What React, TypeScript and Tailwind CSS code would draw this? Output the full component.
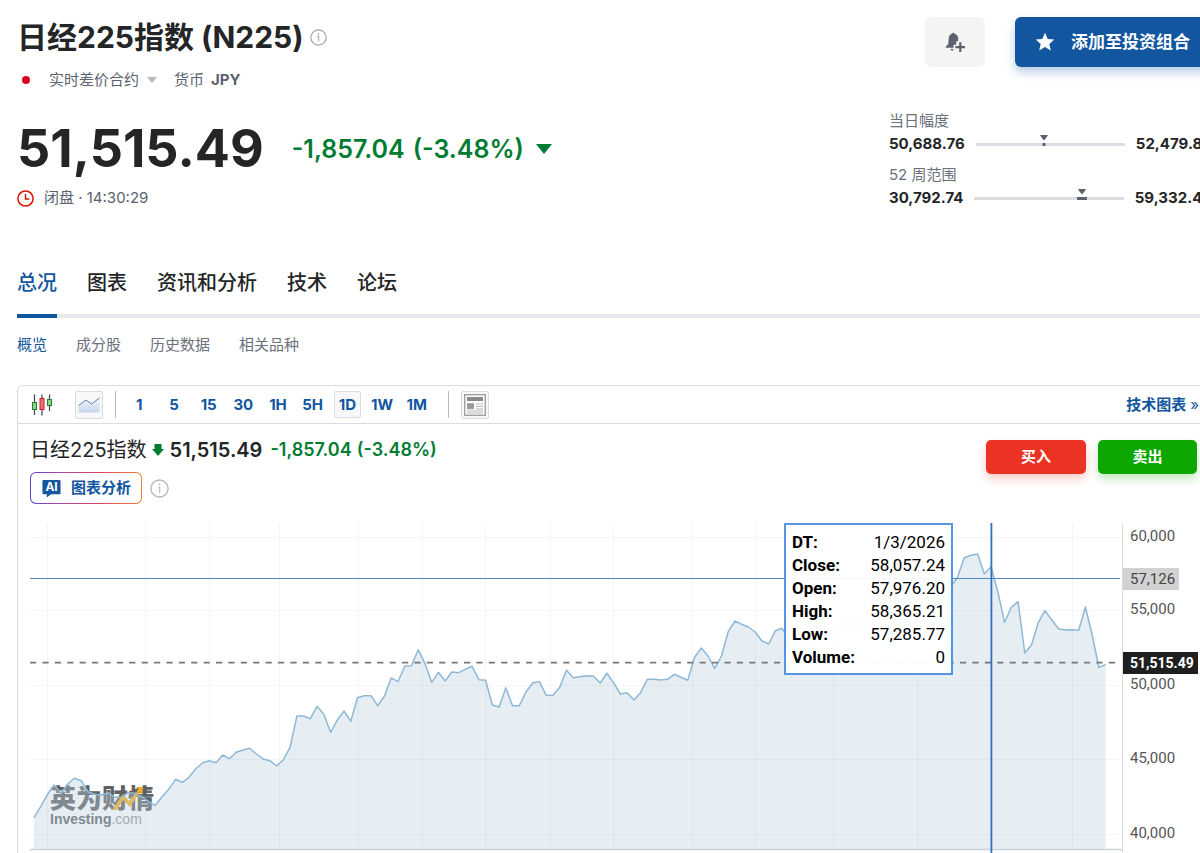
import React from "react";

const FONT = "font-[Inter,'Noto_Sans_CJK_SC',sans-serif]";
const CHART_FONT = "font-[Roboto,'Noto_Sans_CJK_SC',sans-serif]";

const PLOT_W = 1092;
const PLOT_H = 330;
const BASE_Y = 326;
const START_X = 4;
const STEP = 6.74;

const SERIES = [
  294.7, 283.7, 271.3, 262, 270.3, 261, 255.3, 257.7, 268.7, 271.3, 272, 269.7, 274.3, 273.7, 269.7, 270.3,
  273.7, 278.7, 282.3, 273.7, 266.3, 256.3, 259.3, 254.3, 245.7, 240, 237.7, 239.7, 232, 235.7, 229.3, 227,
  225.3, 231, 236, 237.7, 243, 236.7, 224.3, 193, 193, 195.7, 183.3, 191.3, 209.3, 197, 188, 198.3, 174.7,
  172.7, 172.7, 182.7, 173, 155, 158.7, 143.3, 142.7, 126.7, 140.3, 159.3, 149.3, 158, 149, 149.7, 146.3,
  143.3, 156.7, 157.3, 182, 184, 164.7, 182.7, 182.7, 169, 159.7, 158.7, 172.3, 172.3, 164.3, 147.3, 154.7,
  153.7, 152.7, 153.3, 160, 150.3, 159.7, 171, 169.7, 177, 169.7, 156.3, 156.3, 157, 156.3, 151.3, 154.3,
  157.3, 134.3, 125, 133, 145.7, 133, 108.7, 98, 101.3, 104, 109, 118, 121, 107.7, 105.3, 117, 122, 116,
  119, 112, 108, 114, 120, 92, 97, 105, 100, 90, 66, 40, 44, 52, 58, 50, 48, 56, 62, 55, 60, 64, 54.7, 35,
  32.3, 31, 50.7, 43.7, 68.7, 99.3, 84.3, 78.7, 130, 122, 99.3, 87.7, 96.7, 105.7, 107, 106.7, 107.3, 84,
  112, 144.7, 141.3,
];

const GRID_X = [17, 115, 179, 249, 328, 392, 455, 520, 583, 662, 725, 803, 887, 1042];
const TICKS = [
  { label: "60,000", y: 14 },
  { label: "55,000", y: 87 },
  { label: "50,000", y: 162 },
  { label: "45,000", y: 236 },
  { label: "40,000", y: 311 },
];

const linePath = SERIES.map((y, i) => `${i ? "L" : "M"}${(START_X + i * STEP).toFixed(1)} ${y}`).join("");
const lastX = (START_X + (SERIES.length - 1) * STEP).toFixed(1);
const areaPath = `${linePath}L${lastX} ${BASE_Y}L${START_X} ${BASE_Y}Z`;

const TABS = ["总况", "图表", "资讯和分析", "技术", "论坛"];
const SUB_TABS = ["概览", "成分股", "历史数据", "相关品种"];
const PERIODS = ["1", "5", "15", "30", "1H", "5H", "1D", "1W", "1M"];
const QUOTE = [
  ["DT:", "1/3/2026"],
  ["Close:", "58,057.24"],
  ["Open:", "57,976.20"],
  ["High:", "58,365.21"],
  ["Low:", "57,285.77"],
  ["Volume:", "0"],
];

function InfoIcon({ className }: { className: string }) {
  return (
    <svg viewBox="0 0 18 18" className={className} fill="none" aria-hidden="true">
      <circle cx="9" cy="9" r="8.1" stroke="currentColor" strokeWidth="1.3" />
      <circle cx="9" cy="5.2" r="0.9" fill="currentColor" />
      <path d="M7.8 7.800H9.200V13" stroke="currentColor" strokeWidth="1.1" />
    </svg>
  );
}

function BellPlusIcon() {
  return (
    <svg viewBox="0 0 20 20" className="size-5" fill="#5b616e" aria-hidden="true">
      <path d="M7.2 1.600C7.700 .4 9.500 .5 9.700 1.900C11.800 2.500 13 4 13.100 6L13.300 9.200H11.200V12.800H8.600V15.800H.6L1 14.500L3.200 12.300L3.700 6.300C3.900 4 5.200 2.200 7.200 1.600Z" />
      <path d="M5.400 16.900H8.600C8.400 18 7.900 18.400 7.200 18.400S5.700 18 5.400 16.900Z" />
      <path d="M14.200 10.200H16.400V14H20V16.200H16.400V20H14.200V16.200H10.400V14H14.200Z" />
    </svg>
  );
}

type RangeProps = { label: string; low: string; high: string; start: number; width: string };

function RangeRow({ label, low, high, start, width }: RangeProps) {
  return (
    <div>
      <div className="text-[15px] leading-[22px] text-[#6a707c]">{label}</div>
      <div className="flex h-6 items-center gap-[11px] text-[15px] font-bold text-[#232526]">
        <span>{low}</span>
        <div className="relative h-[3px] flex-1 bg-[#d9dce1]">
          <div className={`absolute top-0 h-[3px] -translate-x-1/2 bg-[#5b616e] ${width}`} style={{ left: `${start}%` }} />
          <svg
            viewBox="0 0 8 6"
            className="absolute -top-2 h-[6px] w-2 -translate-x-1/2"
            style={{ left: `${start}%` }}
            aria-hidden="true"
          >
            <path d="M0 0H8L6.500 2.500L4 5.500L1.500 2.500Z" fill="#5b616e" />
          </svg>
        </div>
        <span>{high}</span>
      </div>
    </div>
  );
}

function Header() {
  return (
    <header className="flex justify-between pt-[17px]">
      <div>
        <div className="flex items-center gap-[6px]">
          <h1 className="text-[30px] leading-10 font-bold text-[#232526]">日经225指数 (N225)</h1>
          <InfoIcon className="size-[17px] text-[#a3a6ab]" />
        </div>
        <div className="mt-[11px] flex h-6 items-center text-[15px] text-[#5b616e]">
          <span className="ml-[5px] size-2 rounded-full bg-[#d80027]" />
          <button type="button" className="ml-[19px] flex items-center gap-2">
            实时差价合约
            <svg viewBox="0 0 10 6" className="h-[6px] w-[10px]" aria-hidden="true">
              <path d="M0 0H10L5 6Z" fill="#b5b8bd" />
            </svg>
          </button>
          <span className="ml-[17px]">货币</span>
          <span className="ml-[7px] font-bold">JPY</span>
        </div>
        <div className="mt-[25px] flex items-center">
          <div className="text-[52px] leading-[64px] font-bold text-[#232526]">51,515.49</div>
          <div className="ml-7 flex items-center text-[25px] font-semibold text-[#007c32]">
            <span>-1,857.04</span>
            <span className="ml-2">(-3.48%)</span>
            <svg viewBox="0 0 16 10" className="ml-3 h-[10px] w-4" aria-hidden="true">
              <path d="M0 0H16L8 10Z" fill="#007c32" />
            </svg>
          </div>
        </div>
        <div className="mt-[5px] flex h-6 items-center gap-[10px] text-[15px] text-[#5b616e]">
          <svg viewBox="0 0 17 17" className="size-[17px]" fill="none" stroke="#d91400" strokeWidth="1.500" aria-hidden="true">
            <circle cx="8.500" cy="8.500" r="7.600" />
            <path d="M8.500 4V9H12.300" />
          </svg>
          <span>闭盘 · 14:30:29</span>
        </div>
      </div>

      <div className="shrink-0">
        <div className="-mr-4 flex justify-end gap-[30px]">
          <button type="button" aria-label="添加提醒" className="flex h-[50px] w-[60px] items-center justify-center rounded-md bg-[#f4f4f5]">
            <BellPlusIcon />
          </button>
          <button
            type="button"
            className="flex h-[50px] w-[217px] items-center gap-4 rounded-md bg-[#1256a0] pl-5 text-[17px] font-bold whitespace-nowrap text-white shadow-[0_5px_10px_rgba(18,86,160,0.3)]"
          >
            <svg viewBox="0 0 20 20" className="size-5" fill="white" aria-hidden="true">
              <path d="M10 .8l2.700 6.100 6.600.6-5 4.400 1.500 6.500L10 15l-5.800 3.400 1.500-6.500-5-4.400 6.600-.6z" />
            </svg>
            添加至投资组合
          </button>
        </div>
        <div className="mt-[43px] mr-1 ml-auto flex w-[323px] flex-col gap-2">
          <RangeRow label="当日幅度" low="50,688.76" high="52,479.88" start={46} width="w-[3px]" />
          <RangeRow label="52 周范围" low="30,792.74" high="59,332.43" start={72} width="w-[10px]" />
        </div>
      </div>
    </header>
  );
}

function Toolbar() {
  return (
    <div className="flex h-[37px] items-center pr-4 pl-[13px] text-[15px] text-[#1256a0]">
      <button type="button" aria-label="K线图" className="flex h-7 w-[22px] items-center">
        <svg viewBox="0 0 22 22" className="size-[22px]" aria-hidden="true">
          <path d="M3.500 0.500V21M11 0.500V21.500M18.500 0.500V17" stroke="#444" strokeWidth="1.200" />
          <rect x="1.500" y="8.500" width="4" height="7" fill="#82d77f" stroke="#2f7a3a" />
          <rect x="9" y="4.500" width="4" height="11" fill="#ff6b70" stroke="#b3262c" />
          <rect x="16.500" y="5.500" width="4" height="6" fill="#82d77f" stroke="#2f7a3a" />
        </svg>
      </button>
      <button type="button" aria-label="面积图" className="ml-[22px] flex size-7 items-center justify-center rounded-xs border border-[#d9dce1] bg-[#f7f8fa]">
        <svg viewBox="0 0 22 16" className="h-4 w-[22px]" aria-hidden="true">
          <defs>
            <linearGradient id="area-icon" x1="0" y1="0" x2="0" y2="1">
              <stop offset="0" stopColor="#f1f5fb" />
              <stop offset="1" stopColor="#c6d6ee" />
            </linearGradient>
          </defs>
          <path d="M0.500 9L8 3.500L13.500 7.500L21.500 1.500V15.500H0.500Z" fill="url(#area-icon)" />
          <path d="M0.500 8.500L8 3L13.500 7L21.500 1" fill="none" stroke="#5c7fae" />
        </svg>
      </button>
      <span className="ml-3 h-[27px] w-px bg-[#b5b8bd]" />
      <div className="ml-[6px] grid w-[312px] grid-cols-9 place-items-center font-bold">
        {PERIODS.map((p) => (
          <button
            key={p}
            type="button"
            className={
              p === "1D"
                ? "h-[27px] min-w-[27px] rounded-xs border border-[#d9dce1] bg-[#f7f8fa]"
                : "h-[27px] min-w-[27px]"
            }
          >
            {p}
          </button>
        ))}
      </div>
      <span className="ml-[14px] h-[27px] w-px bg-[#b5b8bd]" />
      <button type="button" aria-label="新闻" className="ml-3 flex size-7 items-center justify-center rounded-xs border border-[#d9dce1] bg-[#f7f8fa]">
        <svg viewBox="0 0 22 22" className="size-[22px]" fill="none" aria-hidden="true">
          <rect x="0.700" y="0.700" width="20.600" height="20.600" fill="white" stroke="#a0a0a0" strokeWidth="1.400" />
          <path d="M3 5H19" stroke="#8a8a8a" strokeWidth="4" />
          <path d="M3 12.200H10" stroke="#9a9a9a" strokeWidth="6" />
          <path d="M12 10H19M12 12.500H19M12 15H19M3 17H19M3 19H19" stroke="#b5b5b5" />
        </svg>
      </button>
      <a href="#technical" className="ml-auto flex shrink-0 gap-1 font-bold">
        技术图表 <span className="font-normal">»</span>
      </a>
    </div>
  );
}

function ChartHeader() {
  return (
    <div className="flex justify-between pt-[13px] pr-[18px] pl-3">
      <div>
        <div className="flex h-[26px] items-center text-[#232526]">
          <span className="text-[20px]">日经225指数</span>
          <svg viewBox="0 0 12 12" className="ml-[5px] h-3 w-3" aria-hidden="true">
            <path d="M2.500 0H9.500V5H12L6 12L0 5H2.500Z" fill="#007c32" />
          </svg>
          <span className="ml-[6px] text-[20px] font-semibold">51,515.49</span>
          <span className="ml-2 text-[18px] font-semibold text-[#007c32]">-1,857.04</span>
          <span className="ml-[5px] text-[18px] font-semibold text-[#007c32]">(-3.48%)</span>
        </div>
        <div className="mt-[9px] flex items-center gap-2">
          <button
            type="button"
            className="h-8 w-28 rounded-md bg-[linear-gradient(90deg,#5b3fd6_0%,#c04a9a_35%,#e0406a_60%,#f08030_100%)] p-px"
          >
            <span className="flex h-full items-center gap-[10px] rounded-[5px] bg-white pl-[11px] text-[15px] font-bold text-[#1256a0]">
              <svg viewBox="0 0 20 20" className="h-[19px] w-[19px]" aria-hidden="true">
                <path d="M1.500 1H18.500Q19.500 1 19.500 2V15Q19.500 16 18.500 16H9.500L5 19.500V16H1.500Q.500 16 .500 15V2Q.500 1 1.500 1Z" fill="#1256a0" />
                <text x="10" y="13" textAnchor="middle" fontSize="12.500" fontWeight="700" fill="white">
                  AI
                </text>
              </svg>
              图表分析
            </span>
          </button>
          <InfoIcon className="size-[19px] text-[#b5b8bd]" />
        </div>
      </div>
      <div className="mt-[3px] flex gap-3 text-[15px] font-bold text-white">
        <button type="button" className="h-[34px] w-[100px] rounded-[5px] bg-[#ea3323] shadow-[0_5px_10px_rgba(234,51,35,0.25)]">
          买入
        </button>
        <button type="button" className="h-[34px] w-[99px] rounded-[5px] bg-[#0ea600] shadow-[0_5px_10px_rgba(14,166,0,0.25)]">
          卖出
        </button>
      </div>
    </div>
  );
}

function Watermark() {
  return (
    <div className="absolute top-[263px] left-5 font-[Inter,'Noto_Sans_CJK_SC',sans-serif] text-[#606163]">
      <div className="text-[26px] leading-[26px] font-black">英为财情</div>
      <div className="font-['Liberation_Sans',sans-serif] text-[14px] leading-[14px]">
        <b>Investing</b>
        <span className="text-[#94979b]">.com</span>
      </div>
      <svg viewBox="0 0 32 26" className="absolute top-0 left-[62px] h-[26px] w-8" aria-hidden="true">
        <path d="M0 24L11 8L17 15L27 3L24 1H31L30 9L28 6L18 21L11 14L5 24Z" fill="#f2ae1c" />
      </svg>
    </div>
  );
}

function Chart() {
  return (
    <div className={`mt-[19px] flex h-[330px] pl-3 ${CHART_FONT}`}>
      <div className="relative min-w-0 flex-1">
        <Watermark />
        <svg
          viewBox={`0 0 ${PLOT_W} ${PLOT_H}`}
          preserveAspectRatio="none"
          className="relative block h-full w-full"
          fill="none"
          role="img"
          aria-label="日经225指数走势"
        >
          <path d={areaPath} fill="#b9cfe0" fillOpacity="0.36" />
          {GRID_X.map((x) => (
            <path key={x} d={`M${x}.500 0V${BASE_Y}`} stroke="#000" strokeOpacity="0.035" />
          ))}
          {TICKS.map((t) => (
            <path key={t.label} d={`M0 ${t.y}.500H${PLOT_W}`} stroke="#000" strokeOpacity="0.035" />
          ))}
          <path d={linePath} stroke="#8fb8d6" strokeWidth="1.500" strokeLinejoin="round" />
          <path d="M0 139.700H1087" stroke="#777" strokeWidth="1.800" strokeDasharray="6.200 6.200" />
          <path d="M0 55.500H1090" stroke="#4f86c6" strokeWidth="1.200" />
          <path d={`M0 ${BASE_Y + 0.5}H${PLOT_W}`} stroke="#cdd3d8" strokeWidth="1.500" />
          <path d="M961.400 0V330" stroke="#2f72bf" strokeWidth="1.800" />
        </svg>
        <dl className="absolute top-0 right-[169px] grid w-[169px] grid-cols-[auto_auto] justify-between border-2 border-[#5495e6] bg-white/95 px-[6px] pt-[6px] pb-1 text-[17px] leading-[23px] text-black">
          {QUOTE.map(([k, v]) => (
            <React.Fragment key={k}>
              <dt className="font-bold">{k}</dt>
              <dd className="text-right">{v}</dd>
            </React.Fragment>
          ))}
        </dl>
      </div>
      <div className="relative w-[93px] shrink-0 border-l border-[#d9dce1] text-[15px] leading-[22px] text-[#555]">
        {TICKS.map((t) => (
          <span key={t.label} className="absolute left-[7px] -translate-y-1/2" style={{ top: t.y - 1 }}>
            {t.label}
          </span>
        ))}
        <span className="absolute top-[45px] left-0 bg-[#d2d2d2] pr-1 pl-[7px] text-[#444]">57,126</span>
        <span className="absolute top-[129px] left-0 bg-[#1f1f1f] pr-1 pl-[7px] text-[14px] font-bold text-white">51,515.49</span>
      </div>
    </div>
  );
}

export default function App() {
  return (
    <div className={`overflow-hidden bg-white leading-6 ${FONT}`}>
      <div className="-mr-4 ml-[17px]">
        <Header />
        <nav className="mt-[52px] flex gap-[30px] border-b-4 border-[#e6e9eb] text-[20px] font-medium text-[#232526]">
          {TABS.map((t, i) => (
            <a
              key={t}
              href={`#tab-${i}`}
              className={i === 0 ? "-mb-1 border-b-4 border-[#1256a0] pt-[9px] pb-[19px] text-[#1256a0]" : "pt-[9px] pb-[19px]"}
            >
              {t}
            </a>
          ))}
        </nav>
        <nav className="mt-[15px] flex gap-[29px] text-[15px] text-[#6a707c]">
          {SUB_TABS.map((t, i) => (
            <a key={t} href={`#sub-${i}`} className={i === 0 ? "text-[#1256a0]" : ""}>
              {t}
            </a>
          ))}
        </nav>
        <section className="mt-7 rounded-t-md border border-b-0 border-[#d9dce1]">
          <Toolbar />
          <div className="border-t border-[#d9dce1]">
            <ChartHeader />
            <Chart />
          </div>
        </section>
      </div>
    </div>
  );
}
